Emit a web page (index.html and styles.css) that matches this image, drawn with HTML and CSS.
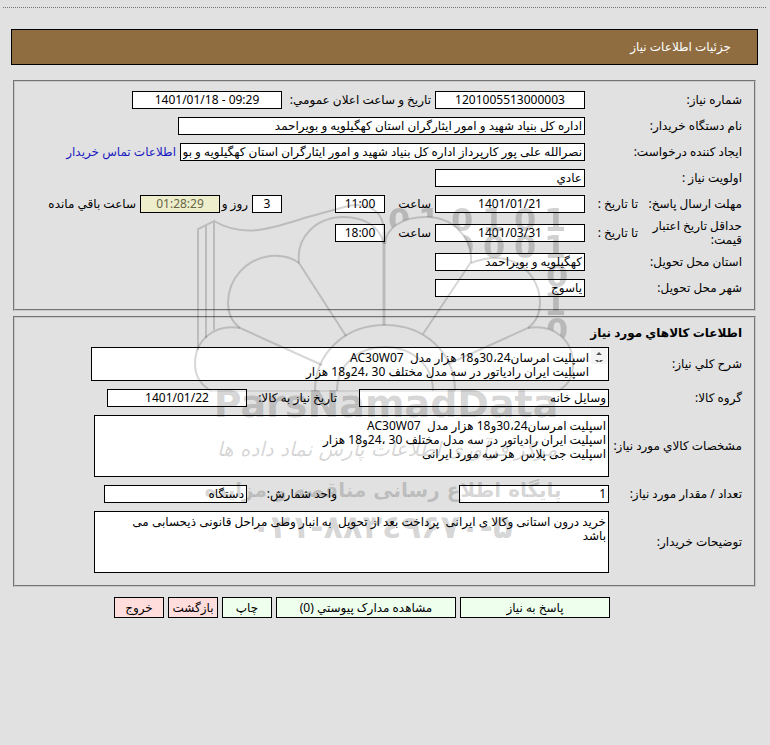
FILE: index.html
```html
<!DOCTYPE html>
<html lang="fa" dir="rtl">
<head>
<meta charset="utf-8">
<title>جزئیات اطلاعات نیاز</title>
<link rel="stylesheet" href="styles.css">
</head>
<body>
<main class="page">
  <hr class="divider">
  <h1 class="title">جزئیات اطلاعات نیاز</h1>

  <form>
    <fieldset class="panel need">
      <div class="row">
        <label class="name" for="number">شماره نیاز:</label>
        <input class="w150 center" id="number" value="1201005513000003" readonly>
        <label class="announced" for="announced">تاریخ و ساعت اعلان عمومي:</label>
        <input class="w150 center" id="announced" value="1401/01/18 - 09:29" dir="ltr" readonly>
      </div>
      <div class="row">
        <label class="name" for="buyer">نام دستگاه خریدار:</label>
        <input class="w407" id="buyer" value="اداره کل بنیاد شهید و امور ایثارگران استان کهگیلویه و بویراحمد" readonly>
      </div>
      <div class="row">
        <label class="name" for="creator">ایجاد کننده درخواست:</label>
        <input class="w405" id="creator" value="نصرالله علی پور کارپرداز اداره کل بنیاد شهید و امور ایثارگران استان کهگیلویه و بویراحمد" readonly>
        <a href="#contact">اطلاعات تماس خریدار</a>
      </div>
      <div class="row">
        <label class="name" for="priority">اولویت نیاز :</label>
        <input class="w150" id="priority" value="عادي" readonly>
      </div>
      <div class="row">
        <span class="name split"><span>مهلت ارسال پاسخ:</span><label for="reply-date">تا تاریخ :</label></span>
        <input class="w150 center" id="reply-date" value="1401/01/21" readonly>
        <label class="hour" for="reply-hour">ساعت</label>
        <input class="w50 center" id="reply-hour" value="11:00" readonly>
        <input class="w30 center days" id="days" value="3" readonly>
        <label class="and" for="days">روز و</label>
        <input class="w80 center timer" id="timer" value="01:28:29" readonly>
        <label for="timer">ساعت باقي مانده</label>
      </div>
      <div class="row tall">
        <span class="name split"><span class="wrap">حداقل تاریخ اعتبار قیمت:</span><label for="price-date">تا تاریخ :</label></span>
        <input class="w150 center" id="price-date" value="1401/03/31" readonly>
        <label class="hour" for="price-hour">ساعت</label>
        <input class="w50 center" id="price-hour" value="18:00" readonly>
      </div>
      <div class="row">
        <label class="name" for="province">استان محل تحویل:</label>
        <input class="w150" id="province" value="کهگیلویه و بویراحمد" readonly>
      </div>
      <div class="row">
        <label class="name" for="city">شهر محل تحویل:</label>
        <input class="w150" id="city" value="یاسوج" readonly>
      </div>
    </fieldset>

    <fieldset class="panel goods">
      <h2>اطلاعات کالاهاي مورد نیاز</h2>
      <div class="row">
        <label class="name" for="summary">شرح کلي نیاز:</label>
        <div class="summary">
          <svg class="scroll" viewBox="0 0 16 16" aria-hidden="true"><path class="track" d="M0 0h16v16H0z"/><path d="M8 4l3 3H5zM4 12h3l1 2H6zM12 12H9l-1 2h2z"/></svg>
          <textarea id="summary" rows="2" readonly>اسپلیت امرسان30،24و18 هزار مدل  AC30W07
اسپلیت ایران رادیاتور در سه مدل مختلف 30 ،24و18 هزار</textarea>
        </div>
      </div>
      <div class="row">
        <label class="name" for="group">گروه کالا:</label>
        <input class="w250" id="group" value="وسایل خانه" readonly>
        <label class="second" for="need-date">تاریخ نیاز به کالا:</label>
        <input class="w140 center" id="need-date" value="1401/01/22" readonly>
      </div>
      <div class="row">
        <label class="name" for="spec">مشخصات کالاي مورد نیاز:</label>
        <textarea id="spec" rows="4" readonly>اسپلیت امرسان30،24و18 هزار مدل  AC30W07
اسپلیت ایران رادیاتور در سه مدل مختلف 30 ،24و18 هزار
اسپلیت جی پلاس  هر سه مورد ایرانی</textarea>
      </div>
      <div class="row">
        <label class="name" for="amount">تعداد / مقدار مورد نیاز:</label>
        <input class="w150" id="amount" value="1" readonly>
        <label class="second" for="unit">واحد شمارش:</label>
        <input class="w143" id="unit" value="دستگاه" readonly>
      </div>
      <div class="row">
        <label class="name" for="notes">توضیحات خریدار:</label>
        <textarea id="notes" rows="4" readonly>خرید درون استانی وکالا ی ایرانی  پرداخت بعد از تحویل  به انبار وطی مراحل قانونی ذیحسابی می باشد</textarea>
      </div>
    </fieldset>

    <div class="actions">
      <button class="go w150" type="button">پاسخ به نیاز</button>
      <button class="go w180" type="button">مشاهده مدارک پیوستي (0)</button>
      <button class="go w50" type="button">چاپ</button>
      <button class="back w50" type="button">بازگشت</button>
      <button class="back w50" type="button">خروج</button>
    </div>
  </form>

  <svg class="watermark" viewBox="190 195 390 360" aria-hidden="true">
    <defs>
      <mask id="outside" maskUnits="userSpaceOnUse" x="190" y="195" width="390" height="360">
        <path fill="#fff" d="M190 195h390v360H190z"/>
        <path fill="#000" d="M384 325V246C384 228 402 217 426 217C452 217 472 236 471 262C513 247 540 274 540 303C540 314 536 322 528 328C554 323 573 340 573 364C573 378 568 385 558 391H384z"/>
      </mask>
    </defs>
    <g class="bits" mask="url(#outside)">
      <text x="388 418 451 482 514 544" y="231">010101</text>
      <text x="452 483 514 544" y="258">0001</text>
      <text x="546" y="287">0</text>
      <text x="544" y="315">1</text>
      <text x="546" y="341">0</text>
    </g>
    <g class="lines">
      <path d="M198 350V229L214 221V330M206 338V225M214 221C246 240 278 226 308 217L348 206C370 202 384 212 384 232"/>
      <path class="spine" d="M384 232V325"/>
      <path d="M384 244C380 226 363 217 344 217C316 217 296 237 299 263L346 336"/>
      <path d="M385 244C386 228 402 217 426 217C452 217 472 236 471 262L423 334"/>
      <path d="M299 263C291 257 281 255 270 256C246 259 228 279 228 303C228 314 232 322 240 328L322 365"/>
      <path d="M471 263C513 247 540 274 540 303C540 314 536 322 528 328L448 364"/>
      <path d="M240 328C214 324 195 340 195 364C195 377 201 385 211 391"/>
      <path d="M528 328C554 324 573 340 573 364C573 378 568 385 558 391"/>
      <path d="M315 391C315 353 345 325 385 325S455 353 455 391M337 391C337 365 358 347 385 347S433 365 433 391"/>
      <path class="thin" d="M211 391H558"/>
    </g>
    <g class="words">
      <text class="brand" x="386" y="417">ParsNamadData</text>
      <text class="script" x="387" y="456">مرکز فرآوری اطلاعات پارس نماد داده ها</text>
      <text class="portal" x="383" y="497">پایگاه اطلاع رسانی مناقصه و مزایده</text>
      <text class="phone" x="382" y="538">۰۲۱-۸۸۳٤۹۶۷۰-۵</text>
    </g>
  </svg>
</main>
</body>
</html>
```

FILE: styles.css
```css
* { box-sizing: border-box; }

body {
  margin: 0;
  background: #e1e1e1;
  color: #000;
  font: 12px/14px "Noto Sans", "DejaVu Sans", sans-serif;
}

.page {
  position: relative;
  padding: 7px 12px 20px 11px;
}

.divider {
  margin: 0 -8px 21px;
  border: 0;
  border-top: 1px dotted #777;
}

.title {
  margin: 0;
  padding: 10px 26px;
  border: 1px solid #000;
  background: #8f6d41;
  color: #fff;
  font-size: 12px;
  font-weight: 400;
  line-height: 14px;
}

.panel {
  display: flex;
  flex-direction: column;
  gap: 8px;
  min-width: 0;
  margin: 0 2px;
  border: 2px groove #c8c8c8;
}

.need {
  margin-top: 15px;
  padding: 9px 12px 12px;
}

.goods {
  margin-top: 5px;
  padding: 7px 12px 12px;
}

h2 {
  margin: 0 0 -2px;
  font-size: 12px;
  font-weight: 700;
  line-height: 16px;
}

.row {
  display: flex;
  align-items: center;
  gap: 4px;
  white-space: nowrap;
}

.need .row { height: 18px; }
.need .tall { height: 24px; }

.name {
  flex: none;
  margin-left: -4px;
}

.need .name { width: 157px; }
.goods .name { width: 133px; }

.split {
  display: flex;
  align-items: center;
}

.split > span { width: 104px; flex: none; }
.split .wrap { white-space: normal; }

input,
textarea,
button {
  margin: 0;
  border: 1px solid #000;
  border-radius: 0;
  background: #fff;
  color: #000;
  font: inherit;
}

input {
  flex: none;
  height: 18px;
  padding: 0 2px 1px;
}

.center { text-align: center; }
.w30 { width: 30px; }
.w50 { width: 50px; }
.w80 { width: 80px; }
.w140 { width: 140px; }
.w143 { width: 143px; }
.w150 { width: 150px; }
.w180 { width: 180px; }
.w250 { width: 250px; }
.w405 { width: 405px; }
.w407 { width: 407px; }

.announced { width: 145px; }
.hour { width: 42px; }
.days { margin-right: 49px; }
.and { width: 24px; }

.timer {
  background: #eeeecc;
  color: #666644;
}

a {
  color: #1a1ac0;
  text-decoration: none;
}

.second {
  width: 86px;
  margin-right: 18px;
}

.goods .w150 + .second { margin-right: 118px; }

textarea {
  display: block;
  width: 515px;
  height: 62px;
  padding: 3px 2px 3px 20px;
  resize: none;
  overflow: hidden;
}

.summary {
  display: flex;
  width: 518px;
  height: 34px;
  border: 1px solid #000;
  background: #fff;
}

.summary textarea {
  flex: 1;
  width: auto;
  height: 32px;
  border: 0;
}

.scroll {
  flex: none;
  width: 16px;
  height: 16px;
  margin-right: 1px;
  fill: #555;
}

.track { fill: #f4f4f4; }

.actions {
  display: flex;
  gap: 4px;
  margin-top: 10px;
  padding-right: 148px;
}

button {
  height: 21px;
  padding: 0;
  white-space: nowrap;
}

.go { background: #eeffee; }
.back { background: #ffdddd; }

.watermark {
  position: absolute;
  top: 195px;
  right: 190px;
  width: 390px;
  height: 360px;
  pointer-events: none;
  direction: ltr;
}

.lines {
  fill: none;
  stroke: #000;
  stroke-opacity: 0.16;
  stroke-width: 2;
}

.spine { stroke-width: 3; }
.thin { stroke-width: 1; }

.bits {
  fill-opacity: 0.18;
  font: 700 32px "DejaVu Sans", sans-serif;
}

.words {
  fill-opacity: 0.18;
  text-anchor: middle;
}

.brand { font: 700 38px "DejaVu Sans", sans-serif; }
.script { font: italic 20px "DejaVu Sans", sans-serif; }
.portal { font: 700 20px "DejaVu Sans", sans-serif; }
.phone { font: 700 32px "DejaVu Sans", sans-serif; unicode-bidi: bidi-override; }
```
